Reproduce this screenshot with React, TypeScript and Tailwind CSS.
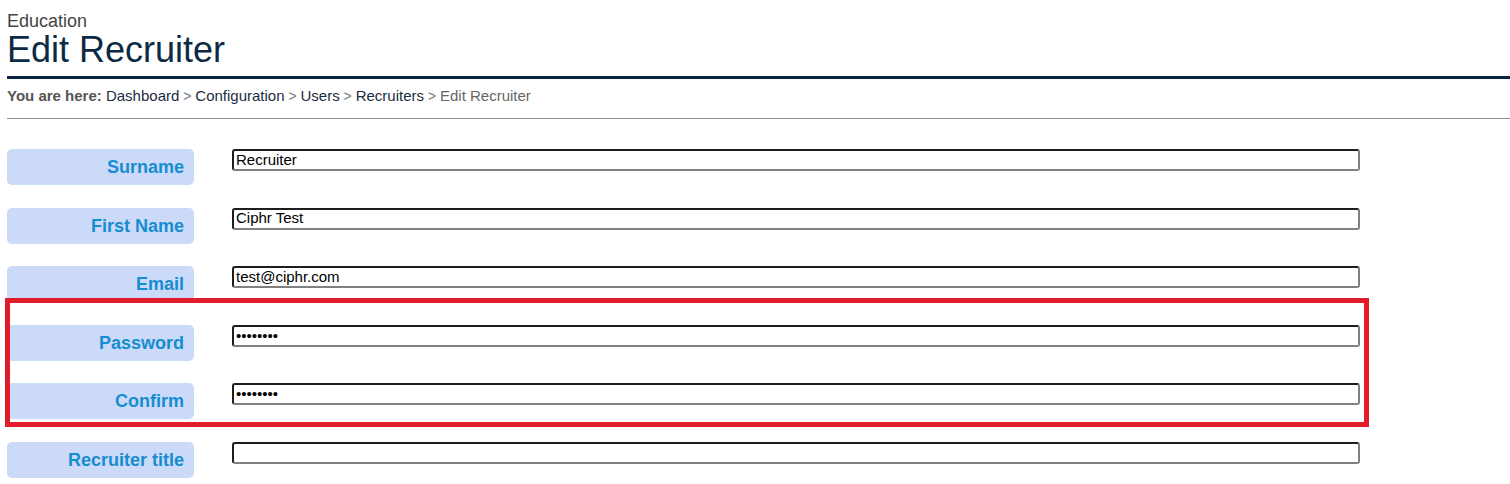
import React from "react";

const fields = [
    {label: "Surname", value: "Recruiter", type: "text"},
    {label: "First Name", value: "Ciphr Test", type: "text"},
    {label: "Email", value: "test@ciphr.com", type: "text"},
    {label: "Password", value: "12345678", type: "password"},
    {label: "Confirm", value: "12345678", type: "password"},
    {label: "Recruiter title", value: "", type: "text"},
];

const crumbs = ["Dashboard", "Configuration", "Users", "Recruiters"];

function FieldRow({label, value, type}: { label: string; value: string; type: string }) {
    return (
        <div className="flex items-start">
            <div
                className="w-[187px] h-[36px] shrink-0 rounded-[5px] bg-[#ccdaf9] pr-[10px] text-right text-[18px] leading-[36px] font-bold text-[#168dcf]">
                {label}
            </div>
            <input
                type={type}
                defaultValue={value}
                readOnly
                className="ml-[38px] w-[1128px] h-[22px] rounded-[3px] border-2 border-t-[#1e1e1e] border-l-[#1e1e1e] border-b-[#808080] border-r-[#808080] bg-white px-[2px] text-[15px] text-black outline-none"
                style={{fontFamily: '"Liberation Sans", Arial, sans-serif'}}
            />
        </div>
    );
}

export default function App() {
    return (
        <div className="min-h-[484px] bg-white pl-[7px] overflow-hidden"
             style={{fontFamily: '"Liberation Sans", Arial, sans-serif'}}>
            {/* page heading */}
            <div className="mt-[11px] text-[18px] leading-[20px] text-[#444]">Education</div>
            <h1 className="text-[36px] leading-[38px] text-[#0c2a45]">Edit Recruiter</h1>
            <div className="mt-[7px] h-[3px] bg-[#0b2440]"/>

            {/* breadcrumb */}
            <div className="mt-[8px] text-[15px] leading-[18px] text-[#666]">
                <span className="font-bold text-[#555]">You are here:</span>{" "}
                {crumbs.map((c) => (
                    <span key={c}>
                        <a className="text-[#1c2c3f]">{c}</a>
                        <span className="text-[14px] text-[#777]"> &gt; </span>
                    </span>
                ))}
                <span>Edit Recruiter</span>
            </div>
            <div className="mt-[13px] h-px bg-[#8c8c8c]"/>

            {/* form */}
            <div className="relative mt-[30px] flex flex-col gap-y-[22.6px]">
                {fields.map((f) => (
                    <FieldRow key={f.label} {...f}/>
                ))}
                {/* highlight around the password fields */}
                <div
                    className="pointer-events-none absolute left-[-2px] top-[149px] w-[1364px] h-[129px] border-[5px] border-[#e21c2a]"/>
            </div>
        </div>
    );
}
